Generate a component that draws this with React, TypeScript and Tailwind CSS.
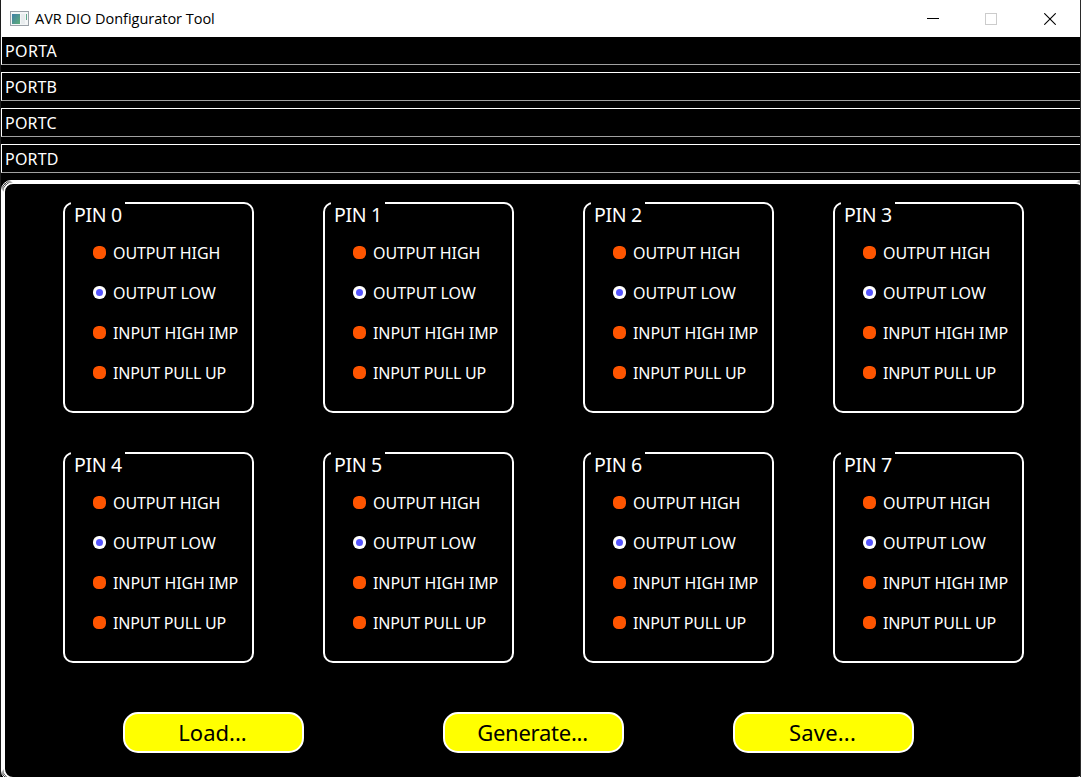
const ports = [
  { label: 'PORTA', tracking: 'tracking-[0.4px]' },
  { label: 'PORTB', tracking: 'tracking-[0.1px]' },
  { label: 'PORTC', tracking: 'tracking-[0.2px]' },
  { label: 'PORTD', tracking: 'tracking-[0.2px]' },
];

const modes = [
  { label: 'OUTPUT HIGH', tracking: 'tracking-[-0.1px]' },
  { label: 'OUTPUT LOW', tracking: 'tracking-normal' },
  { label: 'INPUT HIGH IMP', tracking: 'tracking-[-0.1px]' },
  { label: 'INPUT PULL UP', tracking: 'tracking-[-0.2px]' },
];

const actions = [
  { label: 'Load...', style: 'ml-[118px] tracking-normal' },
  { label: 'Generate...', style: 'ml-[139px] tracking-[-0.25px]' },
  { label: 'Save...', style: 'ml-[109px] tracking-[0.2px]' },
];

function TitleBar() {
  return (
    <header className="flex h-[37px] shrink-0 items-center bg-white pl-[9px] text-black">
      <svg width="19" height="16" viewBox="0 0 19 16" className="shrink-0">
        <defs>
          <linearGradient id="pane" x1="0" y1="0" x2="1" y2="1">
            <stop offset="0" stopColor="#3f7fa8" />
            <stop offset="1" stopColor="#5fae78" />
          </linearGradient>
        </defs>
        <rect x="0.5" y="0.5" width="18" height="14" fill="#f4f6f7" stroke="#9aa1a8" />
        <rect x="2" y="3" width="8" height="10" fill="url(#pane)" />
        <rect x="11" y="3" width="4" height="10" fill="#e8ecee" />
        <rect x="16" y="3" width="1" height="6" fill="#5fa98a" />
      </svg>
      <h1 className="ml-[6px] grow font-['Open_Sans',sans-serif] text-[14.5px] leading-5 tracking-[-0.02px]">AVR DIO Donfigurator Tool</h1>
      <div className="flex">
        <svg width="12" height="12" viewBox="0 0 12 12" className="mr-[46px]" shapeRendering="crispEdges">
          <path d="M0 5.5H12" stroke="#000" />
        </svg>
        <svg width="12" height="12" viewBox="0 0 12 12" className="mr-[47px]" shapeRendering="crispEdges">
          <rect x="0.5" y="0.5" width="11" height="11" fill="none" stroke="#ccc" />
        </svg>
        <svg width="12" height="12" viewBox="0 0 12 12" className="mr-[24px]">
          <path d="M0.3 0.3L11.7 11.7M11.7 0.3L0.3 11.7" stroke="#000" strokeWidth="1.1" />
        </svg>
      </div>
    </header>
  );
}

function Mode({ label, tracking, selected }: { label: string; tracking: string; selected: boolean }) {
  return (
    <div className="flex h-10 items-center">
      <span className={`flex size-[13px] shrink-0 items-center justify-center ${selected ? 'rounded-[6px] bg-white' : 'rounded-[5.5px] bg-[#ff5500]'}`}>
        {selected && <span className="size-[7px] rounded-full bg-[#5555ff]" />}
      </span>
      <span className={`ml-[7px] pt-[2px] text-base leading-5 whitespace-nowrap ${tracking}`}>{label}</span>
    </div>
  );
}

function Pin({ index }: { index: number }) {
  return (
    <section className="h-[211px] w-[191px] rounded-[10px] border-2 border-white">
      <h2 className="-mt-0.5 ml-[6px] h-[30px] w-[54px] bg-black pl-[3px] text-[19.5px] leading-[26px] tracking-[-0.3px] whitespace-nowrap">PIN {index}</h2>
      <div className="ml-[28px]">
        {modes.map((m, i) => (
          <Mode key={m.label} {...m} selected={i === 1} />
        ))}
      </div>
    </section>
  );
}

export default function App() {
  return (
    <div className="flex h-[777px] w-[1081px] flex-col overflow-hidden border-r border-[#2b2b2b] bg-black font-['Noto_Sans',sans-serif] text-white">
      <div className="flex flex-col border-l border-[#1c1c1c]">
        <TitleBar />
        <nav className="flex shrink-0 flex-col gap-[7px]">
          {ports.map((p, i) => (
            <div
              key={p.label}
              className={`flex items-center border-b border-l border-b-[#a0a0a0] border-l-white pl-[3px] text-base leading-5 ${p.tracking} ${i === 0 ? 'h-[28px]' : 'h-[29px] border-t border-t-white'}`}
            >
              {p.label}
            </div>
          ))}
        </nav>
        <main className="mt-[7px] h-[601px] w-[1087px] shrink-0 rounded-[10px] border border-white">
          <div className="h-full rounded-[10px] border border-white">
            <div className="h-full rounded-[10px] border-2 border-white pt-[18px]">
              <div className="ml-[58px] grid grid-cols-[260px_260px_250px_191px] grid-rows-[250px_211px]">
                {[0, 1, 2, 3, 4, 5, 6, 7].map((n) => (
                  <Pin key={n} index={n} />
                ))}
              </div>
              <div className="mt-[49px] flex">
                {actions.map((a) => (
                  <button key={a.label} className={`h-[41px] w-[181px] rounded-[15px] border-2 border-white bg-[#ffff00] pr-[2px] pb-[2px] text-[22px] leading-none text-black ${a.style}`}>
                    {a.label}
                  </button>
                ))}
              </div>
            </div>
          </div>
        </main>
      </div>
    </div>
  );
}
